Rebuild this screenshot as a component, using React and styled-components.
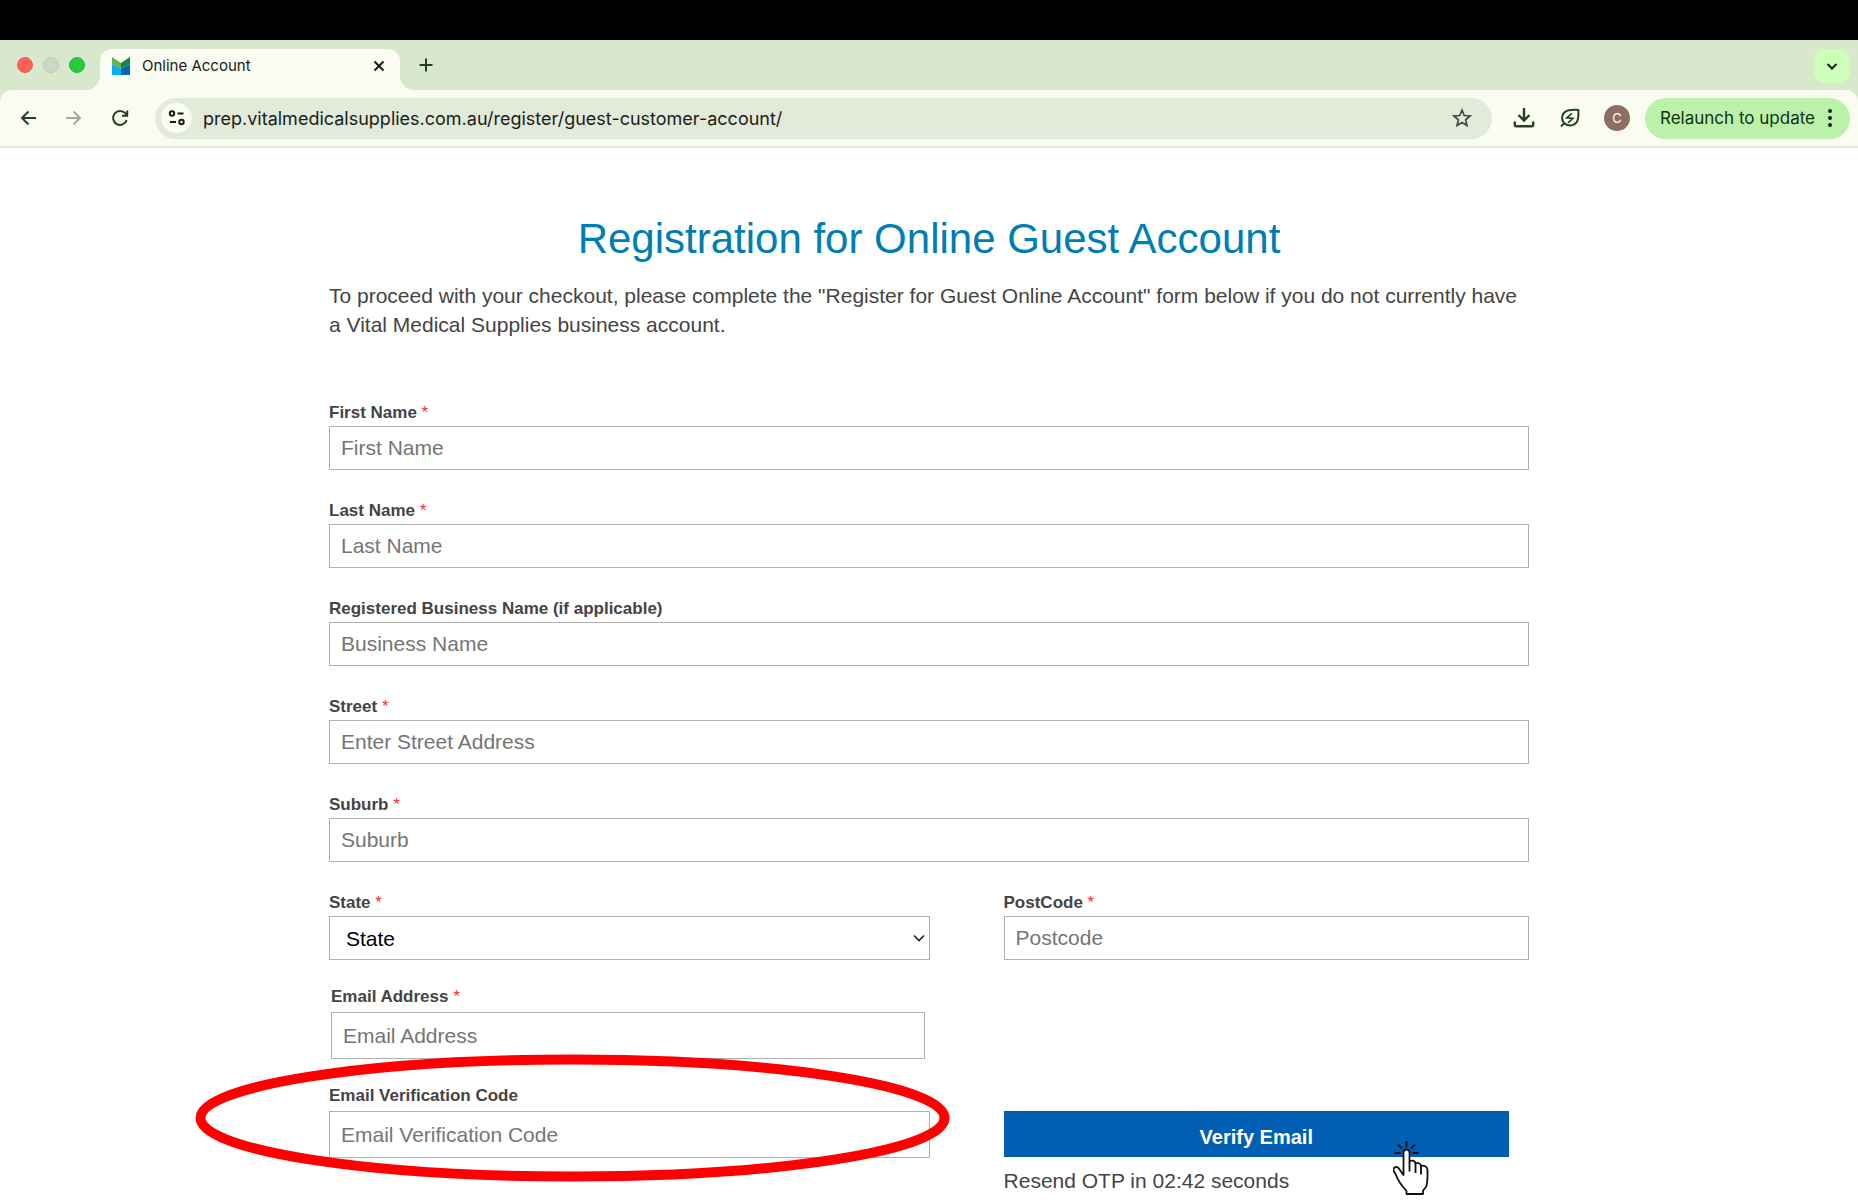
import React, { useState } from "react";
import styled, { createGlobalStyle } from "styled-components";

const GlobalStyle = createGlobalStyle`
  *, *::before, *::after {
    box-sizing: border-box;
  }
  body {
    margin: 0;
    background: #ffffff;
    color: #444444;
    font-family: "Liberation Sans", Arial, sans-serif;
    font-size: 21px;
  }
  button, input, select {
    font: inherit;
    color: inherit;
    margin: 0;
  }
`;

/* browser window */

const Browser = styled.header`
  border-top: 40px solid #000000;
  background: #d7e8cc;
  color: #1f3b1c;
  font-family: Inter, Roboto, sans-serif;
`;

const TabStrip = styled.div`
  display: flex;
  height: 50px;
  padding: 9px 8px 0 17px;
`;

const WindowButtons = styled.div`
  display: flex;
  gap: 10px;
  width: 83px;
  padding-top: 8px;
`;

const WindowButton = styled.button`
  width: 16px;
  height: 16px;
  padding: 0;
  border: 1px solid ${(props) => props.$border};
  border-radius: 50%;
  background: ${(props) => props.$color};
`;

const Tab = styled.div`
  position: relative;
  display: flex;
  align-items: center;
  width: 300px;
  padding: 0 12px 8px;
  border-radius: 12px 12px 0 0;
  background: #fafbf1;
  color: #1b1c18;
  font-size: 15px;

  &::before,
  &::after {
    content: "";
    position: absolute;
    bottom: 0;
    width: 14px;
    height: 14px;
  }
  &::before {
    right: 100%;
    background: radial-gradient(circle at 0 0, transparent 14px, #fafbf1 14px);
  }
  &::after {
    left: 100%;
    background: radial-gradient(circle at 100% 0, transparent 14px, #fafbf1 14px);
  }
`;

const TabTitle = styled.span`
  flex: 1;
  margin-left: 12px;
`;

const IconButton = styled.button`
  display: flex;
  align-items: center;
  justify-content: center;
  width: ${(props) => props.$width || 18}px;
  height: ${(props) => props.$height || 18}px;
  padding: 0;
  border: 0;
  border-radius: ${(props) => props.$radius || 0}px;
  background: ${(props) => props.$background || "transparent"};
  flex-shrink: 0;
`;

const NewTab = styled(IconButton)`
  margin: 7px auto 0 17px;
`;

const Toolbar = styled.div`
  display: flex;
  align-items: center;
  height: 58px;
  padding: 0 8px 0 15px;
  border-bottom: 2px solid #e4e8dd;
  border-radius: 12px 12px 0 0;
  background: #fafbf1;
`;

const NavButtons = styled.nav`
  display: flex;
  gap: 21px;
  width: 140px;
`;

const AddressBar = styled.div`
  display: flex;
  flex: 1;
  align-items: center;
  height: 41px;
  padding: 0 20px 0 6px;
  border-radius: 21px;
  background: #e2eada;
`;

const AddressInput = styled.input`
  flex: 1;
  min-width: 0;
  height: 32px;
  padding: 0 11px;
  border: 0;
  outline: 0;
  background: transparent;
  color: #1b1c18;
  font-size: 18px;
`;

const ToolbarActions = styled.div`
  display: flex;
  align-items: center;
  gap: 22px;
  padding: 0 15px 0 21px;
`;

const Avatar = styled.button`
  width: 26px;
  height: 26px;
  padding: 0;
  border: 0;
  border-radius: 50%;
  background: #8d6e63;
  color: #ffffff;
  font-size: 13px;
`;

const RelaunchButton = styled.button`
  display: flex;
  align-items: center;
  justify-content: space-between;
  width: 205px;
  height: 41px;
  padding: 0 18px 0 15px;
  border: 0;
  border-radius: 21px;
  background: #bbf2a9;
  color: #12300f;
  font-size: 17px;
  white-space: nowrap;
`;

/* registration page */

const Page = styled.main`
  max-width: 1200px;
  margin: 0 auto;
  padding-top: 67px;
`;

const Title = styled.h1`
  margin: 0;
  color: #007db3;
  font-size: 42px;
  font-weight: 400;
  line-height: 48px;
  text-align: center;
`;

const Intro = styled.p`
  margin: 18px 0 63px;
  line-height: 29px;
`;

const Form = styled.form`
  display: flex;
  flex-direction: column;
  gap: 26px;
`;

const Details = styled.div`
  display: flex;
  flex-direction: column;
  gap: 30px;
`;

const Row = styled.div`
  display: grid;
  grid-template-columns: 8fr 7fr;
  column-gap: 74px;
`;

const Field = styled.div`
  display: flex;
  flex-direction: column;
  gap: ${(props) => (props.$tall ? 4 : 2)}px;
  padding: ${(props) => (props.$inset ? "0 5px 0 2px" : "0")};
`;

const Label = styled.label`
  font-size: 17px;
  font-weight: 700;
  line-height: 22px;
`;

const Required = styled.span`
  color: #f0303a;
  font-weight: 400;
`;

const TextInput = styled.input`
  width: 100%;
  height: ${(props) => (props.$tall ? 47 : 44)}px;
  padding: 0 11px;
  border: 1px solid #b0b0b0;
  border-radius: 0;
  background: #ffffff;

  &::placeholder {
    color: #757575;
    opacity: 1;
  }
`;

const SelectWrap = styled.div`
  position: relative;
  display: flex;

  svg {
    position: absolute;
    top: 50%;
    right: 4px;
    transform: translateY(-50%);
    pointer-events: none;
  }
`;

const Select = styled.select`
  width: 100%;
  height: 44px;
  padding: 0 16px;
  border: 1px solid #b0b0b0;
  border-radius: 0;
  background: #ffffff;
  color: #000000;
  appearance: none;
`;

const CodeField = styled(Field)`
  position: relative;
`;

const Highlight = styled.svg`
  position: absolute;
  top: -31px;
  left: -134px;
  pointer-events: none;
`;

const VerifyColumn = styled.div`
  position: relative;
  padding: 26px 20px 0 0;
`;

const VerifyButton = styled.button`
  display: block;
  width: 100%;
  height: 46px;
  padding: 6px 0 0;
  border: 0;
  background: #005eb3;
  color: #ffffff;
  font-size: 20px;
  font-weight: 700;
`;

const Resend = styled.p`
  margin: 9px 0 0;
  line-height: 29px;
`;

const Pointer = styled.svg`
  position: absolute;
  top: 55px;
  right: 100px;
  pointer-events: none;
`;

const fields = [
  { id: "firstName", label: "First Name", placeholder: "First Name", required: true },
  { id: "lastName", label: "Last Name", placeholder: "Last Name", required: true },
  { id: "business", label: "Registered Business Name (if applicable)", placeholder: "Business Name" },
  { id: "street", label: "Street", placeholder: "Enter Street Address", required: true },
  { id: "suburb", label: "Suburb", placeholder: "Suburb", required: true },
];

function FieldLabel({ id, text, required }) {
  return (
    <Label htmlFor={id}>
      {text} {required && <Required>*</Required>}
    </Label>
  );
}

function TextField({ id, label, placeholder, required, inset, tall }) {
  return (
    <Field $inset={inset} $tall={tall}>
      <FieldLabel id={id} text={label} required={required} />
      <TextInput id={id} placeholder={placeholder} $tall={tall} />
    </Field>
  );
}

function Line({ size = 18, width = 2, color = "#24421f", children }) {
  return (
    <svg width={size} height={size} viewBox={`0 0 ${size} ${size}`} fill="none" stroke={color} strokeWidth={width}>
      {children}
    </svg>
  );
}

function Favicon() {
  return (
    <svg width="18" height="18" viewBox="0 0 18 18">
      <path d="M0 0l9 6v6L0 7z" fill="#62b54a" />
      <path d="M18 0L9 6v6l9-5z" fill="#0d8a4a" />
      <path d="M0 7l9 5v6H0z" fill="#08aef0" />
      <path d="M18 7l-9 5v6h9z" fill="#0864b5" />
    </svg>
  );
}

function BrowserBar() {
  const [url, setUrl] = useState("prep.vitalmedicalsupplies.com.au/register/guest-customer-account/");
  return (
    <Browser>
      <TabStrip>
        <WindowButtons>
          <WindowButton aria-label="Close window" $color="#ff5f57" $border="#ed5a50" />
          <WindowButton aria-label="Minimise window" $color="#ced6c8" $border="#bec8b8" />
          <WindowButton aria-label="Zoom window" $color="#28c840" $border="#24b839" />
        </WindowButtons>
        <Tab>
          <Favicon />
          <TabTitle>Online Account</TabTitle>
          <IconButton aria-label="Close tab">
            <Line color="#1b1c18">
              <path d="M4.500 4.500l9 9M13.500 4.500l-9 9" />
            </Line>
          </IconButton>
        </Tab>
        <NewTab aria-label="New tab">
          <Line>
            <path d="M9 2.500v13M2.500 9h13" />
          </Line>
        </NewTab>
        <IconButton aria-label="Search tabs" $width={36} $height={34} $radius={11} $background="#cdffb8">
          <Line color="#12200f">
            <path d="M4.500 7l4.500 4.500L13.500 7" />
          </Line>
        </IconButton>
      </TabStrip>
      <Toolbar>
        <NavButtons>
          <IconButton $width={25} aria-label="Back">
            <Line>
              <path d="M17 9H3M9.500 2.500L3 9l6.500 6.500" />
            </Line>
          </IconButton>
          <IconButton $width={25} aria-label="Forward">
            <Line color="#a3aa9d">
              <path d="M1 9h14M8.500 2.500L15 9l-6.500 6.500" />
            </Line>
          </IconButton>
          <IconButton $width={25} aria-label="Reload">
            <Line>
              <path d="M15.700 11.200A7 7 0 1 1 14.300 4.200L16.200 6.200M16.200 1.500v5.200H11" />
            </Line>
          </IconButton>
        </NavButtons>
        <AddressBar>
          <IconButton aria-label="Site information" $width={31} $height={30} $radius={15} $background="#fafbf1">
            <Line color="#1b1c18">
              <circle cx="4" cy="4.500" r="2.200" />
              <path d="M9.500 4.500h6M2 13h6" />
              <circle cx="13.500" cy="13" r="2.200" />
            </Line>
          </IconButton>
          <AddressInput aria-label="Address" value={url} onChange={(e) => setUrl(e.target.value)} />
          <IconButton aria-label="Bookmark" $width={20} $height={20}>
            <svg width="20" height="20" viewBox="0 0 20 20" fill="none" stroke="#3f4a3c" strokeWidth="1.700">
              <path d="M10 2.200l2.250 5.300 5.750.5-4.350 3.800 1.300 5.650L10 14.450l-4.950 3 1.300-5.650L2 8l5.750-.5z" />
            </svg>
          </IconButton>
        </AddressBar>
        <ToolbarActions>
          <IconButton aria-label="Downloads" $width={22} $height={22}>
            <svg width="22" height="22" viewBox="0 0 22 22" fill="none" stroke="#24421f" strokeWidth="2.400">
              <path d="M11 1v12M5.500 8l5.500 5.500L16.500 8" />
              <path d="M1.800 14.500v3.300a1.500 1.500 0 0 0 1.500 1.500h15.400a1.500 1.500 0 0 0 1.500-1.500v-3.300" />
            </svg>
          </IconButton>
          <IconButton aria-label="Energy saver" $width={25} $height={22}>
            <Line size={22}>
              <path d="M2 19.500l3.300-3.300C1 11.500 3.500 4.500 10 3.300c3-.5 6.300-.6 9.300-.3.300 3 .2 6.300-.4 9-1.300 6.200-8.400 8.700-13.600 4.200" />
              <path d="M12.800 6.300l-5.100 4.500 6.300.6-5.100 4.400" strokeWidth="1.600" />
            </Line>
          </IconButton>
          <Avatar aria-label="Profile">C</Avatar>
        </ToolbarActions>
        <RelaunchButton>
          Relaunch to update
          <svg width="4" height="18" viewBox="0 0 4 18" fill="#12200f">
            <circle cx="2" cy="2" r="2" />
            <circle cx="2" cy="9" r="2" />
            <circle cx="2" cy="16" r="2" />
          </svg>
        </RelaunchButton>
      </Toolbar>
    </Browser>
  );
}

export default function App() {
  return (
    <>
      <GlobalStyle />
      <BrowserBar />
      <Page>
        <Title>Registration for Online Guest Account</Title>
        <Intro>
          To proceed with your checkout, please complete the "Register for Guest Online Account" form below if you do
          not currently have a Vital Medical Supplies business account.
        </Intro>
        <Form onSubmit={(e) => e.preventDefault()}>
          <Details>
            {fields.map((field) => (
              <TextField key={field.id} {...field} />
            ))}
            <Row>
              <Field>
                <FieldLabel id="state" text="State" required />
                <SelectWrap>
                  <Select id="state">
                    <option>State</option>
                  </Select>
                  <svg width="14" height="14" viewBox="0 0 14 14" fill="none" stroke="#222222" strokeWidth="1.600">
                    <path d="M2 4.500l5 5 5-5" />
                  </svg>
                </SelectWrap>
              </Field>
              <TextField id="postcode" label="PostCode" placeholder="Postcode" required />
            </Row>
          </Details>
          <Row>
            <TextField id="email" label="Email Address" placeholder="Email Address" required inset tall />
          </Row>
          <Row>
            <CodeField $tall>
              <FieldLabel id="code" text="Email Verification Code" />
              <TextInput id="code" placeholder="Email Verification Code" $tall />
              <Highlight width="755" height="128" viewBox="0 0 755 128">
                <ellipse cx="377.500" cy="64" rx="372" ry="58.500" fill="none" stroke="#ff0000" strokeWidth="10" />
              </Highlight>
            </CodeField>
            <VerifyColumn>
              <VerifyButton type="submit">Verify Email</VerifyButton>
              <Resend>Resend OTP in 02:42 seconds</Resend>
              <Pointer width="36" height="56" viewBox="0 0 36 56" fill="none" stroke="#111111" strokeWidth="1.800" strokeLinejoin="round">
                <path d="M13.500 1v6M5 4.500l4 4M22 4.500l-4 4M1.500 13h6M19.500 13h6" />
                <path
                  fill="#ffffff"
                  d="M10.500 35V12.500c0-4 6-4 6 0V22c1.500-2.500 5.500-1.500 6 1.500 2-1.500 5 0 5.500 2.500 2.500-1 6.500.5 6.500 4 0 6 .5 12-1.500 17L30 50.500V54H13.500v-3C9 46 5 41 3 35l-2.500-4.500c-1-3 3-4.500 5-2.500z"
                />
                <path d="M16.500 22v9.500M22.500 23.500v9.500M28 26v8.500" />
              </Pointer>
            </VerifyColumn>
          </Row>
        </Form>
      </Page>
    </>
  );
}
